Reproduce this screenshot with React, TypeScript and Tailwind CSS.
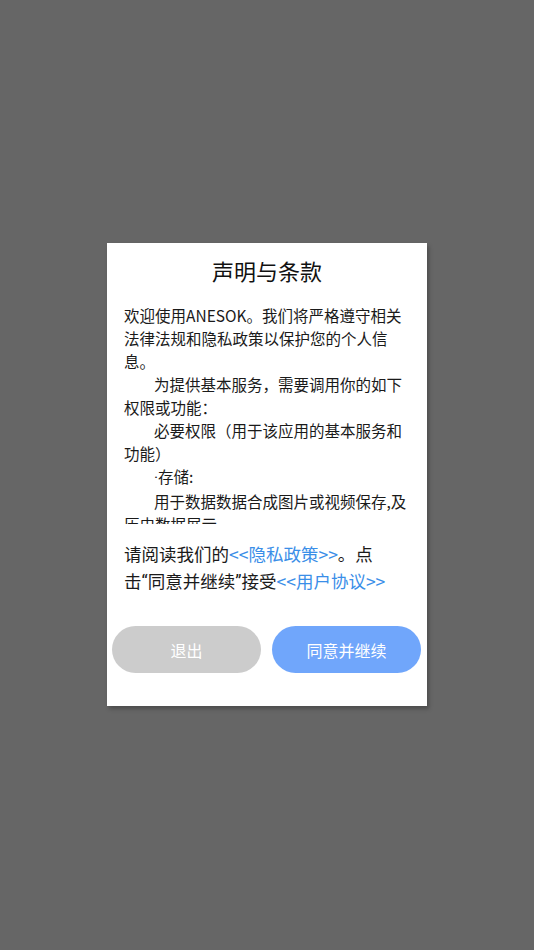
import React from "react";

const L = ({ children }: { children: React.ReactNode }) => (
  <span style={{ fontFamily: 'Roboto, "Noto Sans", sans-serif' }}>{children}</span>
);

const bodyLines: { text: React.ReactNode; indent?: boolean }[] = [
  { text: "欢迎使用ANESOK。我们将严格遵守相关" },
  { text: "法律法规和隐私政策以保护您的个人信" },
  { text: "息。" },
  { text: "为提供基本服务，需要调用你的如下", indent: true },
  { text: "权限或功能：" },
  { text: "必要权限（用于该应用的基本服务和", indent: true },
  { text: "功能）" },
  {
    text: (
      <>
        <L>·</L>存储:
      </>
    ),
    indent: true,
  },
  { text: "用于数据数据合成图片或视频保存,及", indent: true },
  { text: "历史数据展示" },
];

export default function App() {
  return (
    <div
      className="w-[534px] h-[950px] bg-[#666666] flex items-start justify-center"
      style={{ fontFamily: '"Noto Sans CJK SC", "Noto Sans", sans-serif' }}
    >
      <div className="mt-[243px] w-[320px] h-[463px] bg-white flex flex-col shadow-[2px_3px_4px_rgba(0,0,0,0.25)]">
        <div className="pt-[12px] text-center text-[22px] leading-[30px] text-[#111]">
          声明与条款
        </div>
        <div className="mt-[19px] pl-[17px] pr-[16px] h-[220px] overflow-hidden text-[15.5px] leading-[23px] text-[#1a1a1a]">
          {bodyLines.map((l, i) => (
            <div key={i} className={l.indent ? "pl-[30px] whitespace-nowrap" : "whitespace-nowrap"}>
              {l.text}
            </div>
          ))}
        </div>
        <div className="mt-[16px] pl-[17px] pr-[10px] text-[17.5px] leading-[27px] text-[#1a1a1a]">
          <div className="whitespace-nowrap">
            请阅读我们的<span className="text-[#3a8ee8]">&lt;&lt;隐私政策&gt;&gt;</span>。点
          </div>
          <div className="whitespace-nowrap">
            击<L>“</L>同意并继续<L>”</L>接受<span className="text-[#3a8ee8]">&lt;&lt;用户协议&gt;&gt;</span>
          </div>
        </div>
        <div className="mt-[30px] pl-[5px] pr-[6px] flex gap-[11px]">
          <button className="flex-1 h-[47px] rounded-full bg-[#cccccc] text-white text-[16px]">
            退出
          </button>
          <button className="flex-1 h-[47px] rounded-full bg-[#70a6fb] text-white text-[16px]">
            同意并继续
          </button>
        </div>
      </div>
    </div>
  );
}
